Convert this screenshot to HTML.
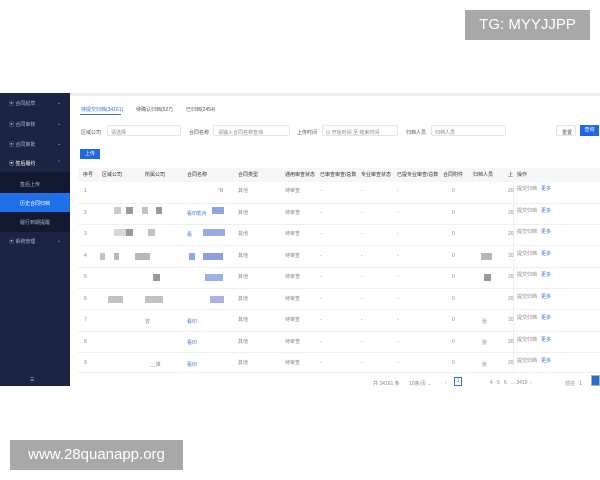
<!DOCTYPE html>
<html><head><meta charset="utf-8"><style>
*{margin:0;padding:0;box-sizing:border-box}
body{width:600px;height:480px;background:#fff;position:relative;overflow:hidden;font-family:"Liberation Sans","Noto Sans CJK SC",sans-serif;font-size:5px;color:#555}
.a{position:absolute;white-space:nowrap}
.sb{left:0;top:93px;width:70px;height:293px;background:#1b2543}
.sub{left:0;top:172px;width:70px;height:60px;background:#111a30}
.act{left:0;top:193px;width:70px;height:19px;background:#1f6fe8}
.si{color:#aeb6c8;font-size:5px}
.hd{left:78px;top:168px;width:522px;height:14px;background:#f5f6f8}
.ln{left:78px;width:522px;height:1px;background:#eef0f3}
.g{color:#888}
.b{color:#3a6fd8}
.col{line-height:5.375px}
.blk{position:absolute;background:#9a9a9a}
.inp{position:absolute;border:1px solid #e3e5ea;height:11px;top:125px;border-radius:2px}
</style></head><body>
<div class="a" style="left:465px;top:10px;width:125px;height:30px;background:#a8a8a8;color:#fff;font-size:15px;line-height:30px;text-align:center">TG: MYYJJPP</div>
<div class="a" style="left:10px;top:440px;width:173px;height:30px;background:#a8a8a8;color:#fff;font-size:15px;line-height:30px;text-align:center">www.28quanapp.org</div>

<div class="a" style="left:70px;top:93px;width:530px;height:3px;background:#ededed"></div>
<div class="a sb"></div>
<div class="a sub"></div>
<div class="a act"></div>
<div class="a si" style="left:9px;top:100px">▣ 合同起草</div><div class="a si" style="left:57px;top:100px">⌄</div>
<div class="a si" style="left:9px;top:121px">▣ 合同审核</div><div class="a si" style="left:57px;top:121px">⌄</div>
<div class="a si" style="left:9px;top:141px">▣ 合同审批</div><div class="a si" style="left:57px;top:141px">⌄</div>
<div class="a si" style="left:9px;top:160px;color:#fff">▣ 签后履约</div><div class="a si" style="left:57px;top:160px">⌃</div>
<div class="a si" style="left:20px;top:181px">签后上传</div>
<div class="a si" style="left:20px;top:200px;color:#fff">历史合同归档</div>
<div class="a si" style="left:20px;top:219px">履行到期提醒</div>
<div class="a si" style="left:9px;top:238px">▣ 系统管理</div><div class="a si" style="left:57px;top:238px">⌄</div>
<div class="a si" style="left:30px;top:377px">☰</div>

<div class="a b" style="left:81px;top:106px">待提交归档(34161)</div>
<div class="a" style="left:80px;top:114px;width:41px;height:1px;background:#3a6fd8"></div>
<div class="a" style="left:136px;top:106px">待确认归档(527)</div>
<div class="a" style="left:186px;top:106px">已归档(2454)</div>

<div class="a" style="left:81px;top:129px">区域公司</div>
<div class="inp" style="left:107px;width:74px"></div><div class="a g" style="left:111px;top:129px">请选择</div>
<div class="a" style="left:189px;top:129px">合同名称</div>
<div class="inp" style="left:213px;width:77px"></div><div class="a g" style="left:218px;top:129px">请输入合同名称查询</div>
<div class="a" style="left:297px;top:129px">上传时间</div>
<div class="inp" style="left:322px;width:76px"></div><div class="a g" style="left:326px;top:129px">⊡ 开始时间 至 结束时间</div>
<div class="a" style="left:406px;top:129px">归档人员</div>
<div class="inp" style="left:431px;width:75px"></div><div class="a g" style="left:435px;top:129px">归档人员</div>
<div class="inp" style="left:556px;width:20px"></div><div class="a" style="left:562px;top:129px">重置</div>
<div class="a" style="left:580px;top:125px;width:19px;height:11px;background:#2168e8;color:#fff;text-align:center;line-height:11px">查询</div>
<div class="a" style="left:80px;top:149px;width:20px;height:10px;background:#2168e8;color:#fff;text-align:center;line-height:10px">上传</div>

<div class="a hd"></div>
<div class="a" style="left:83px;top:171px;color:#333">序号</div>
<div class="a" style="left:102px;top:171px;color:#333">区域公司</div>
<div class="a" style="left:145px;top:171px;color:#333">所属公司</div>
<div class="a" style="left:187px;top:171px;color:#333">合同名称</div>
<div class="a" style="left:238px;top:171px;color:#333">合同类型</div>
<div class="a" style="left:285px;top:171px;color:#333">通用审查状态</div>
<div class="a" style="left:320px;top:171px;color:#333">已审查审查/总数</div>
<div class="a" style="left:361px;top:171px;color:#333">专业审查状态</div>
<div class="a" style="left:397px;top:171px;color:#333">已提专业审查/总数</div>
<div class="a" style="left:443px;top:171px;color:#333">合同附件</div>
<div class="a" style="left:473px;top:171px;color:#333">归档人员</div>
<div class="a" style="left:508px;top:171px;color:#333">上</div>
<div class="a" style="left:517px;top:171px;color:#333">操作</div>
<div class="a" style="left:513px;top:182px;width:1px;height:190px;background:#eef0f3"></div>

<div class="a ln" style="top:203px"></div><div class="a ln" style="top:224px"></div><div class="a ln" style="top:245px"></div><div class="a ln" style="top:267px"></div><div class="a ln" style="top:288px"></div><div class="a ln" style="top:309px"></div><div class="a ln" style="top:331px"></div><div class="a ln" style="top:352px"></div><div class="a ln" style="top:372px"></div>

<!-- rows -->
<div class="a g col" style="left:84px;top:189px">1<br><br><br><br>2<br><br><br><br>3<br><br><br><br>4<br><br><br><br>5<br><br><br><br>6<br><br><br><br>7<br><br><br><br>8<br><br><br><br>9</div>
<div class="a g col" style="left:238px;top:189px">其他<br><br><br><br>其他<br><br><br><br>其他<br><br><br><br>其他<br><br><br><br>其他<br><br><br><br>其他<br><br><br><br>其他<br><br><br><br>其他<br><br><br><br>其他</div>
<div class="a g col" style="left:285px;top:189px">待审查<br><br><br><br>待审查<br><br><br><br>待审查<br><br><br><br>待审查<br><br><br><br>待审查<br><br><br><br>待审查<br><br><br><br>待审查<br><br><br><br>待审查<br><br><br><br>待审查</div>
<div class="a g col" style="left:320px;top:189px">-<br><br><br><br>-<br><br><br><br>-<br><br><br><br>-<br><br><br><br>-<br><br><br><br>-<br><br><br><br>-<br><br><br><br>-<br><br><br><br>-</div>
<div class="a g col" style="left:361px;top:189px">-<br><br><br><br>-<br><br><br><br>-<br><br><br><br>-<br><br><br><br>-<br><br><br><br>-<br><br><br><br>-<br><br><br><br>-<br><br><br><br>-</div>
<div class="a g col" style="left:397px;top:189px">-<br><br><br><br>-<br><br><br><br>-<br><br><br><br>-<br><br><br><br>-<br><br><br><br>-<br><br><br><br>-<br><br><br><br>-<br><br><br><br>-</div>
<div class="a g col" style="left:452px;top:189px">0<br><br><br><br>0<br><br><br><br>0<br><br><br><br>0<br><br><br><br>0<br><br><br><br>0<br><br><br><br>0<br><br><br><br>0<br><br><br><br>0</div>
<div class="a g col" style="left:508px;top:189px">20<br><br><br><br>20<br><br><br><br>20<br><br><br><br>20<br><br><br><br>20<br><br><br><br>20<br><br><br><br>20<br><br><br><br>20<br><br><br><br>20</div>
<div class="a g col" style="left:517px;top:187px">提交归档<br><br><br><br>提交归档<br><br><br><br>提交归档<br><br><br><br>提交归档<br><br><br><br>提交归档<br><br><br><br>提交归档<br><br><br><br>提交归档<br><br><br><br>提交归档<br><br><br><br>提交归档</div>
<div class="a b col" style="left:541px;top:187px">更多<br><br><br><br>更多<br><br><br><br>更多<br><br><br><br>更多<br><br><br><br>更多<br><br><br><br>更多<br><br><br><br>更多<br><br><br><br>更多<br><br><br><br>更多</div>

<!-- blurred blocks -->
<div class="a g" style="left:218px;top:188px">"N</div>
<div class="blk" style="left:114px;top:207px;width:7px;height:7px;opacity:.5"></div><div class="blk" style="left:126px;top:207px;width:7px;height:7px"></div>
<div class="blk" style="left:142px;top:207px;width:6px;height:7px;opacity:.6"></div><div class="blk" style="left:156px;top:207px;width:6px;height:7px"></div>
<div class="a b" style="left:187px;top:210px">看印影片</div><div class="blk" style="left:212px;top:207px;width:12px;height:7px;background:#8ea3e0"></div>
<div class="blk" style="left:114px;top:229px;width:12px;height:7px;opacity:.4"></div><div class="blk" style="left:126px;top:229px;width:7px;height:7px"></div>
<div class="blk" style="left:148px;top:229px;width:7px;height:7px;opacity:.6"></div>
<div class="a b" style="left:187px;top:231px">看</div><div class="blk" style="left:203px;top:229px;width:22px;height:7px;background:#9aa9e0"></div>
<div class="blk" style="left:88px;top:252px;width:0"></div>
<div class="blk" style="left:100px;top:253px;width:5px;height:7px;opacity:.6"></div><div class="blk" style="left:114px;top:253px;width:5px;height:7px;opacity:.7"></div>
<div class="blk" style="left:135px;top:253px;width:15px;height:7px;opacity:.7"></div>
<div class="blk" style="left:189px;top:253px;width:6px;height:7px;background:#8ea8e8"></div><div class="blk" style="left:203px;top:253px;width:20px;height:7px;background:#8e9ee0"></div>
<div class="blk" style="left:481px;top:253px;width:11px;height:7px;opacity:.7"></div>
<div class="blk" style="left:153px;top:274px;width:7px;height:7px"></div>
<div class="blk" style="left:205px;top:274px;width:18px;height:7px;background:#9fb0e8"></div>
<div class="blk" style="left:484px;top:274px;width:7px;height:7px"></div>
<div class="blk" style="left:108px;top:296px;width:15px;height:7px;opacity:.6"></div>
<div class="blk" style="left:145px;top:296px;width:18px;height:7px;opacity:.6"></div>
<div class="blk" style="left:210px;top:296px;width:14px;height:7px;background:#aab2e0"></div>
<div class="a g" style="left:145px;top:318px">曾</div><div class="a b" style="left:187px;top:318px">看印</div><div class="a g" style="left:482px;top:318px">张</div>
<div class="a b" style="left:187px;top:339px">看印</div><div class="a g" style="left:482px;top:339px">张</div>
<div class="a b" style="left:187px;top:361px">看印</div><div class="a g" style="left:150px;top:361px">__谭</div><div class="a g" style="left:482px;top:361px">张</div>

<!-- pagination -->
<div class="a g" style="left:373px;top:380px">共 34161 条</div>
<div class="a g" style="left:409px;top:380px">10条/页 ⌄</div>
<div class="a g" style="left:445px;top:380px">‹</div>
<div class="a b" style="left:454px;top:377px;width:8px;height:9px;border:1px solid #3a6fd8;text-align:center;line-height:7px">1</div>
<div class="a g" style="left:490px;top:380px">4 &nbsp; 5 &nbsp; 6 &nbsp; ... 3419 &nbsp;›</div>
<div class="a g" style="left:565px;top:380px">前往 &nbsp; 1</div>
<div class="a" style="left:591px;top:375px;width:9px;height:11px;background:#2d6ad0;border:1px solid #9bb"></div>
</body></html>
